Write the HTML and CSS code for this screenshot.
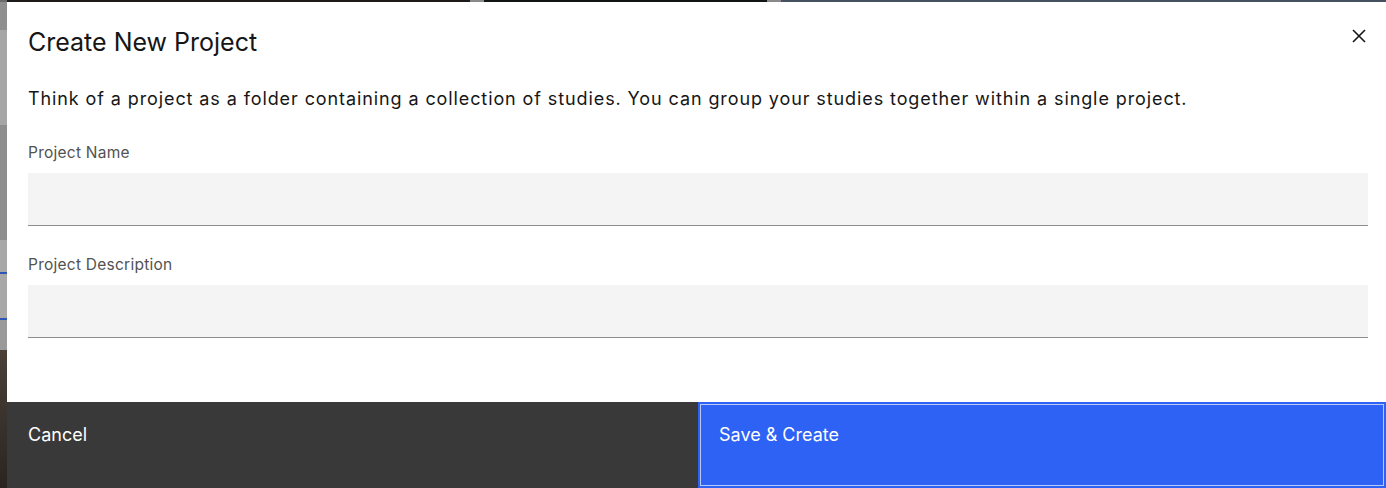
FILE: index.html
```html
<!DOCTYPE html>
<html lang="en">
<head>
<meta charset="utf-8">
<title>Create New Project</title>
<link rel="stylesheet" href="styles.css">
</head>
<body>
<div class="topstrip"></div>
<div class="page">
  <div class="modal" role="dialog" aria-labelledby="modal-title">
    <div class="modal-header">
      <h2 class="modal-title" id="modal-title">Create New Project</h2>
      <button class="modal-close" type="button" aria-label="Close">
        <svg width="14" height="14" viewBox="0 0 14 14" aria-hidden="true"><path d="M1 1 L13 13 M13 1 L1 13" stroke="#161616" stroke-width="1.6" fill="none"/></svg>
      </button>
    </div>
    <div class="modal-content">
      <p class="modal-text">Think of a project as a folder containing a collection of studies. You can group your studies together within a single project.</p>
      <div class="field">
        <label class="field-label" for="pname">Project Name</label>
        <input class="field-input" id="pname" type="text">
      </div>
      <div class="field">
        <label class="field-label" for="pdesc">Project Description</label>
        <input class="field-input" id="pdesc" type="text">
      </div>
    </div>
    <div class="modal-footer">
      <button class="btn btn-secondary" type="button">Cancel</button>
      <button class="btn btn-primary" type="button">Save &amp; Create</button>
    </div>
  </div>
</div>
</body>
</html>
```
FILE: styles.css
```css
html, body {
  margin: 0;
  padding: 0;
  height: 100%;
  overflow: hidden;
}
body {
  font-family: "Inter", "Noto Sans", sans-serif;
  background: linear-gradient(to bottom,
    #8f8f8f 0, #8f8f8f 30px,
    #a6a6a6 30px, #a6a6a6 125px,
    #8e8e8e 125px, #8e8e8e 240px,
    #a8a8a8 240px, #a8a8a8 272px,
    #2f55b8 272px, #2f55b8 274px,
    #a8a8a8 274px, #a8a8a8 318px,
    #2f55b8 318px, #2f55b8 320px,
    #9a9a9a 320px, #9a9a9a 350px,
    #4a4038 350px, #2a2420 488px);
}
.topstrip {
  height: 2px;
  background: linear-gradient(to right,
    #6a6a6a 0, #6a6a6a 7px,
    #1e1a18 7px, #1e1a18 470px,
    #8a8a8a 470px, #8a8a8a 484px,
    #111614 484px, #111614 767px,
    #8a8a8a 767px, #8a8a8a 781px,
    #455160 781px, #455160 1386px);
}
.page {
  padding-left: 7px;
}
.modal {
  background: #ffffff;
  display: flex;
  flex-direction: column;
  height: 486px;
}
.modal-header {
  position: relative;
  padding: 24px 60px 0 21px;
}
.modal-title {
  margin: 0;
  font-size: 25px;
  line-height: 32px;
  font-weight: 400;
  color: #161616;
}
.modal-close {
  position: absolute;
  top: 0;
  right: 0;
  width: 54px;
  height: 68px;
  border: 0;
  background: transparent;
  padding: 0;
  display: flex;
  align-items: center;
  justify-content: center;
  cursor: pointer;
}
.modal-content {
  padding: 0 18px 0 21px;
  flex: 1;
}
.modal-text {
  margin: 27px 0 0;
  font-size: 18px;
  line-height: 27px;
  letter-spacing: 0.9px;
  color: #161616;
}
.field {
  display: flex;
  flex-direction: column;
  margin-top: 32px;
}
.field + .field {
  margin-top: 30px;
}
.field-label {
  font-size: 15.5px;
  line-height: 18px;
  letter-spacing: 0.25px;
  color: #525252;
  margin-bottom: 11px;
}
.field-input {
  height: 53px;
  box-sizing: border-box;
  border: 0;
  border-bottom: 1px solid #8d8d8d;
  background: #f4f4f4;
  margin: 0;
  font: inherit;
  padding: 0 18px;
}
.modal-footer {
  display: grid;
  grid-template-columns: 691px 1fr;
  height: 86px;
}
.btn {
  border: 0;
  margin: 0;
  font-family: inherit;
  font-size: 18px;
  line-height: 24px;
  color: #ffffff;
  text-align: left;
  padding: 21px 20px 0 21px;
  display: flex;
  align-items: flex-start;
  cursor: pointer;
}
.btn-secondary {
  background: #393939;
}
.btn-primary {
  background: #2d62f5;
  border: 2px solid #2d62f5;
  box-shadow: inset 0 0 0 1px #b9c9fa;
  padding-left: 19px;
  padding-top: 19px;
}
```
